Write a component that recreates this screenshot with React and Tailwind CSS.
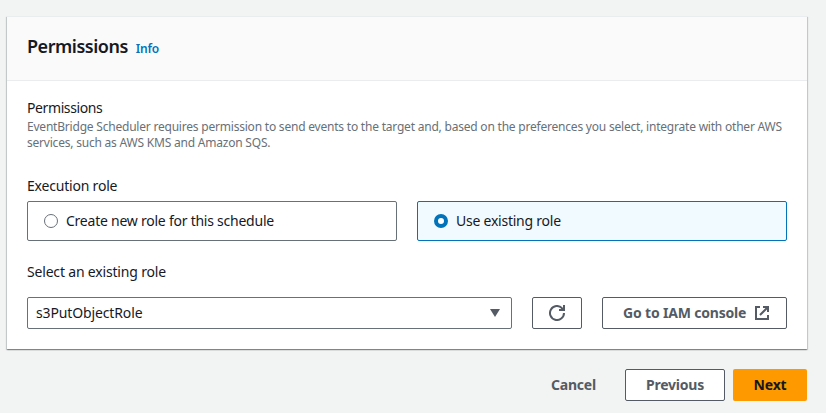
const RadioTile = ({ label, selected }) => (
  <label
    className={`flex h-10 flex-1 items-center rounded-[2px] border pl-4 ${
      selected ? "border-[#0073bb] bg-[#f1faff]" : "border-[#687078] bg-white"
    }`}
  >
    <span
      className={`size-[14px] shrink-0 rounded-full bg-white ${
        selected ? "border-4 border-[#0073bb]" : "border border-[#687078]"
      }`}
    />
    <span className="ml-2 whitespace-nowrap tracking-[-0.24px]">{label}</span>
  </label>
);

const RefreshIcon = () => (
  <svg width="16" height="16" viewBox="0 0 16 16" fill="none" stroke="#545b64" strokeWidth="2">
    <path d="M15 8a7 7 0 1 1-2-4.9L15 5" />
    <path d="M10 5h5V0" />
    <path d="M12 2.5 14.5 5H12z" fill="#545b64" stroke="none" />
  </svg>
);

const ExternalIcon = () => (
  <svg width="16" height="16" viewBox="0 0 16 16" fill="none" stroke="#545b64" strokeWidth="2">
    <path d="M14 10v4H2V2h4" />
    <path d="M9 2h5v5M14 2 6 10" />
  </svg>
);

export default function App() {
  return (
    <main className="h-[413px] w-[826px] overflow-hidden bg-[#f2f3f3] pl-[7px] pt-4 font-['Noto_Sans',sans-serif] text-[14px] leading-[22px] text-[#16191f]">
      <section className="h-[333px] w-[800px] border-t border-[#eaeded] bg-white shadow-[0_1px_1px_0_rgba(0,28,36,0.3),1px_1px_1px_0_rgba(0,28,36,0.15),-1px_1px_1px_0_rgba(0,28,36,0.15)]">
        <header className="flex h-16 items-baseline border-b border-[#eaeded] bg-[#fafafa] px-5 pt-[18px]">
          <h2 className="text-[18px] font-semibold leading-[22px] tracking-[-0.48px]">Permissions</h2>
          <a className="ml-2 text-[12px] font-semibold leading-4 tracking-[-0.2px] text-[#0073bb]">Info</a>
        </header>
        <div className="px-5 pt-4">
          <div className="tracking-[-0.4px]">Permissions</div>
          <p className="whitespace-nowrap text-[12px] leading-4 tracking-[-0.21px] text-[#687078]">
            EventBridge Scheduler requires permission to send events to the target and, based on the preferences you select, integrate with other AWS
            <br />
            services, such as AWS KMS and Amazon SQS.
          </p>
          <div className="mt-6 tracking-[-0.2px]">Execution role</div>
          <div className="mt-1 flex gap-5">
            <RadioTile label="Create new role for this schedule" />
            <RadioTile label="Use existing role" selected />
          </div>
          <div className="mt-5 tracking-[-0.18px]">Select an existing role</div>
          <div className="mt-[14px] flex h-8 gap-5">
            <div className="flex w-[485px] items-center justify-between rounded-[2px] border border-[#687078] pl-2 pr-[11px]">
              <span className="tracking-[-0.13px]">s3PutObjectRole</span>
              <svg width="10" height="8" viewBox="0 0 10 8" fill="#545b64">
                <path d="M0 0h10L5 8z" />
              </svg>
            </div>
            <button className="flex w-[50px] items-center justify-center rounded-[2px] border border-[#545b64]">
              <RefreshIcon />
            </button>
            <button className="flex w-[185px] items-center justify-between whitespace-nowrap rounded-[2px] border border-[#545b64] pl-5 pr-4 font-bold text-[#545b64]">
              <span className="tracking-[-0.18px]">Go to IAM console</span>
              <ExternalIcon />
            </button>
          </div>
        </div>
      </section>
      <footer className="mt-5 flex h-8 w-[800px] items-center justify-end font-bold tracking-[-0.2px] text-[#545b64]">
        <button className="mr-[29px]">Cancel</button>
        <button className="mr-2 h-8 w-[100px] rounded-[2px] border border-[#545b64] bg-white">Previous</button>
        <button className="h-8 w-[74px] rounded-[2px] bg-[#ff9900] text-[#16191f]">Next</button>
      </footer>
    </main>
  );
}
